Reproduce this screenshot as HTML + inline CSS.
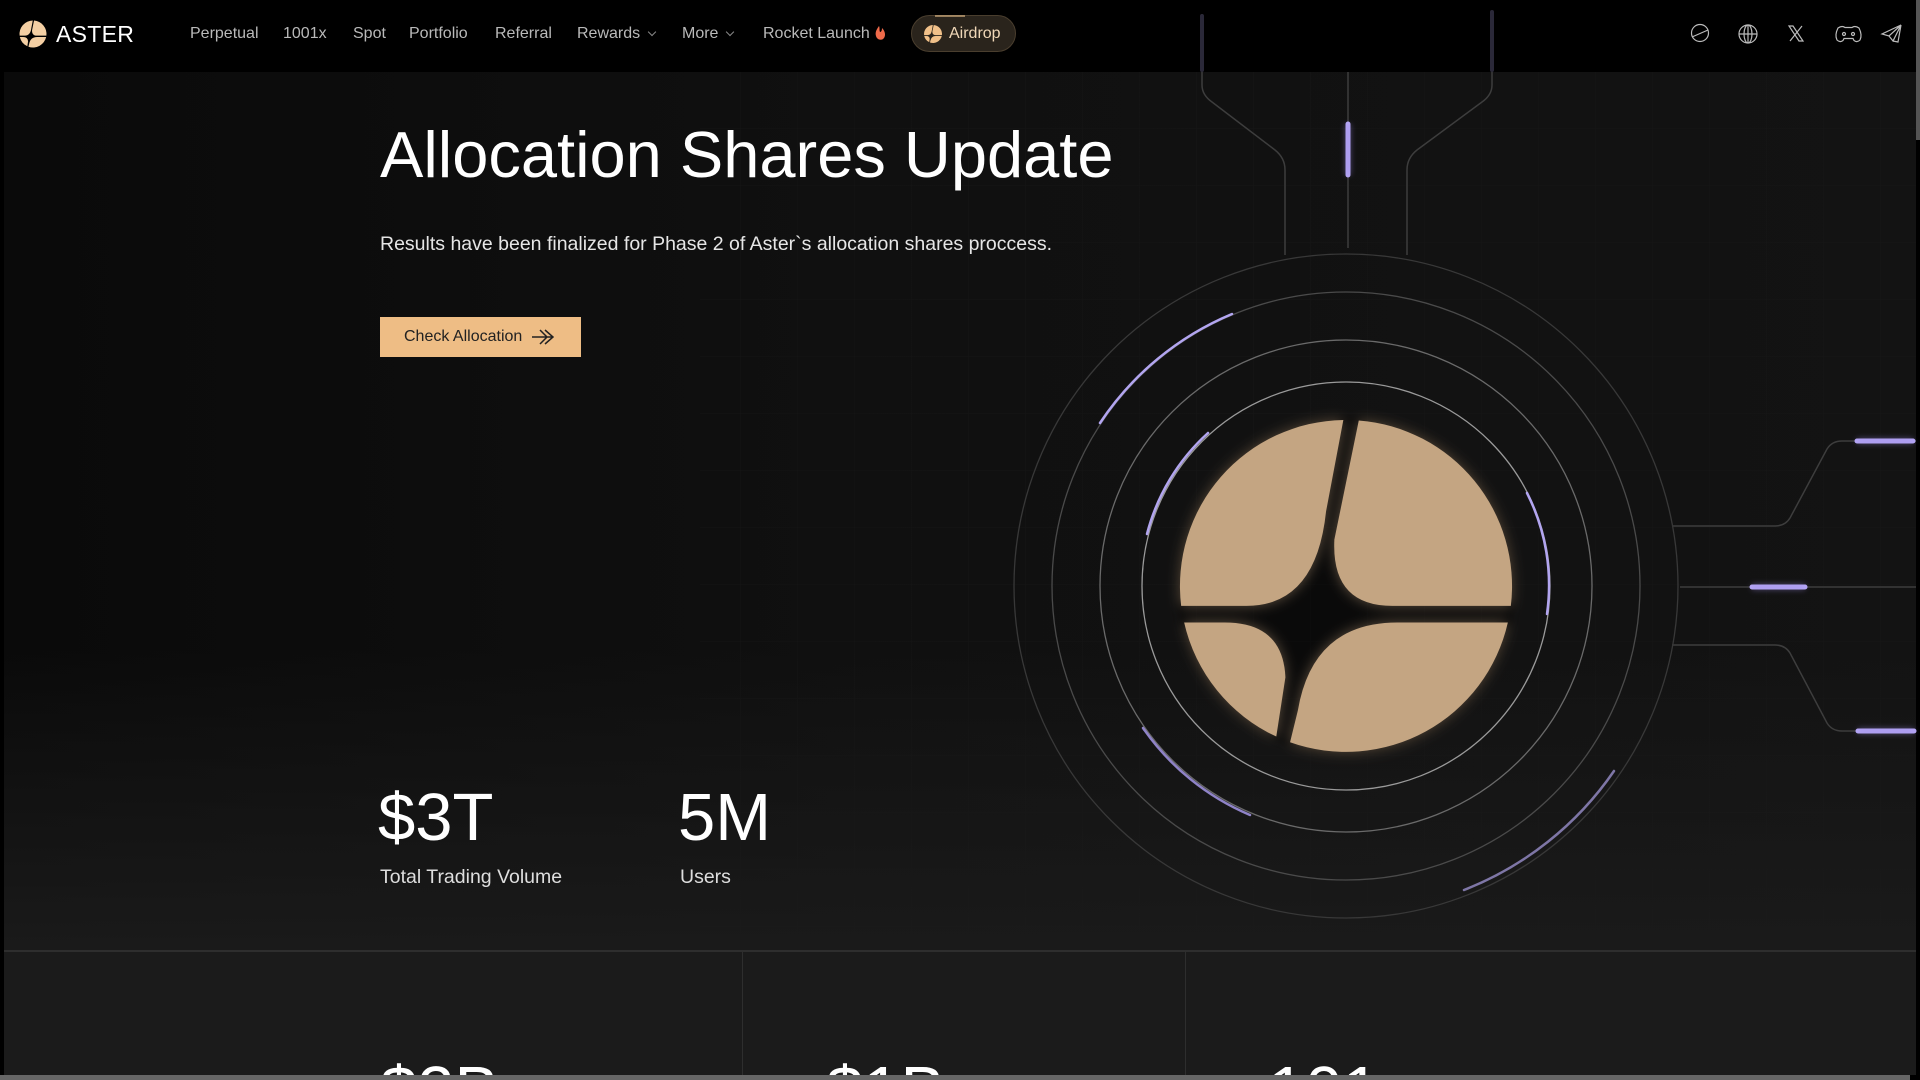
<!DOCTYPE html>
<html><head><meta charset="utf-8"><style>
*{margin:0;padding:0;box-sizing:border-box}
html,body{width:1920px;height:1080px;overflow:hidden;background:#000;font-family:"Liberation Sans",sans-serif}
.nav{position:absolute;left:0;top:0;width:1920px;height:72px;background:#000}
.main{position:absolute;left:4px;top:72px;width:1912px;height:878px;background:linear-gradient(90deg,#0a0a0a 0%,#101010 45%,#131313 100%)}
.main:after{content:"";position:absolute;left:0;right:0;bottom:0;height:300px;background:linear-gradient(180deg,rgba(27,27,27,0),#1a1a1a)}
.bottom{position:absolute;left:4px;top:950px;width:1912px;height:125px;background:#1b1b1b;border-top:2px solid #2e2e2e;overflow:hidden}
.nv{position:absolute;top:25px;font-size:16px;color:#b9b9b9}
.chev{display:inline-block;width:6px;height:6px;border-right:1px solid #888;border-bottom:1px solid #888;transform:rotate(45deg);margin-left:9px;position:relative;top:-3px}
h1{position:absolute;left:380px;top:117px;font-size:65px;font-weight:400;color:#fff;letter-spacing:0}
.sub{position:absolute;left:380px;top:233px;font-size:19.5px;color:#e6e6e6}
.btn{position:absolute;left:380px;top:317px;width:201px;height:40px;background:#eebd85;color:#222;font-size:16px;padding:11px 0 0 24px}
.btn svg{position:absolute;left:150px;top:10px}
.big{position:absolute;font-size:67px;color:#fff}
.lbl{position:absolute;font-size:19.5px;color:#dedede}
</style></head><body>
<div class="nav"></div>
<div class="main"></div>
<div class="bottom">
 <div style="position:absolute;left:738px;top:0;width:1px;height:125px;background:#2e2e2e"></div>
 <div style="position:absolute;left:1181px;top:0;width:1px;height:125px;background:#2e2e2e"></div>
 <div class="big" style="left:376px;top:100px">$2B</div>
 <div class="big" style="left:822px;top:100px">$1B</div>
 <div class="big" style="left:1264px;top:100px">101</div>
</div>
<svg width="1920" height="1080" style="position:absolute;left:0;top:0">
 <defs>
  <g id="logo">
   <path d="M -1.6 -99.99 A 100 100 0 0 0 -99.3 12 L -60 12 Q -18 12 -12 -45 Z"/>
   <path d="M 7.7 -99.7 A 100 100 0 0 1 99.3 12 L 28 12 Q -9 12 -7 -28 Z"/>
   <path d="M -97.5 22 L -73 22 Q -38 22 -36.5 55 L -42 90.7 A 100 100 0 0 1 -97.5 22 Z"/>
   <path d="M -33.7 94.1 L -29 75 Q -20 22 31 22 L 97.5 22 A 100 100 0 0 1 -33.7 94.1 Z"/>
  </g>
  <filter id="gl" x="-50%" y="-50%" width="200%" height="200%"><feGaussianBlur stdDeviation="3"/></filter>
  <filter id="dg" x="-20%" y="-20%" width="140%" height="140%"><feDropShadow dx="0" dy="0" stdDeviation="4" flood-color="#c4a37f" flood-opacity="0.45"/></filter>
  <pattern id="grid" width="57" height="57" patternUnits="userSpaceOnUse" x="0" y="72"><path d="M57 0V57H0" fill="none" stroke="#1a1a1a" stroke-width="1"/></pattern>
 </defs>
 <rect x="700" y="72" width="1216" height="878" fill="url(#grid)" opacity="0.5"/>
 <g fill="none" stroke="#3d3d3d" stroke-width="1.5">
  <path d="M1202 14V85Q1202 95 1212 102L1275 150Q1285 158 1285 170V255"/>
  <path d="M1492 14V85Q1492 95 1482 102L1417 150Q1407 158 1407 170V255"/>
  <path d="M1348 72V248"/>
  <path d="M1672 526H1775Q1785 526 1790 518L1827 449Q1832 441 1842 441H1916"/>
  <path d="M1680 587H1916"/>
  <path d="M1672 645H1775Q1785 645 1790 653L1827 723Q1832 731 1842 731H1916"/>
 </g>
 <g stroke="#2a2838" stroke-width="4" stroke-linecap="round"><path d="M1202 16V70"/><path d="M1492 12V70"/></g>
 <g stroke="#b5a6f5" stroke-width="5" stroke-linecap="round">
  <path d="M1348 124V175"/><path d="M1857 441H1913"/><path d="M1752 587H1805"/><path d="M1858 731H1914"/>
 </g>
 <g stroke="#9d8ce8" stroke-width="6" opacity="0.4" filter="url(#gl)">
  <path d="M1348 124V175"/><path d="M1857 441H1913"/><path d="M1752 587H1805"/><path d="M1858 731H1914"/>
 </g>
 <g fill="none" transform="translate(1346 586)">
  <circle r="332" stroke="#383838" stroke-width="1.3"/>
  <circle r="294" stroke="#4a4a4a" stroke-width="1.3"/>
  <circle r="246" stroke="#6a6a6a" stroke-width="1.3"/>
  <circle r="204" stroke="#9a9a9a" stroke-width="1.3"/>
  <g stroke="#b2a5f0" stroke-width="2.5" stroke-linecap="round">
   <path d="M -246 -163 A 295 295 0 0 1 -114 -272"/>
   <path d="M -199 -52 A 206 206 0 0 1 -138 -153"/>
   <path d="M 181 -93 A 204 204 0 0 1 201 28"/>
   <path d="M -203 142 A 248 248 0 0 0 -96 229" stroke="#8f83c8"/>
   <path d="M 268 185 A 326 326 0 0 1 118 304" stroke="#7e76a6"/>
  </g>
  <circle r="170" fill="#000" opacity="0.4" filter="url(#gl)"/>
  <g transform="scale(1.66)" fill="#c4a582" filter="url(#dg)"><use href="#logo"/></g>
 </g>
 <g transform="translate(33 34) scale(0.135)" fill="#f4cfa3"><use href="#logo"/></g>
 <rect x="911.5" y="15.5" width="104" height="36" rx="18" fill="#2a241c" stroke="#4a3e2e"/>
 <path d="M935 16H965" stroke="#d9b483" stroke-width="1.2"/>
 <g transform="translate(933 34) scale(0.09)" fill="#f0c089"><use href="#logo"/></g>
 <path d="M879 26C876 30 875 33 876 36C877 40 882 41 884 38C886 35 885 31 882 28C882 31 881 32 880 32C879 30 880 28 879 26Z" fill="#ef6a4a"/>
 <g fill="none" stroke="#bbb" stroke-width="1.2">
  <circle cx="1700" cy="33" r="8.5"/><path d="M1692 37L1708 30"/>
  <circle cx="1748" cy="34" r="9"/><ellipse cx="1748" cy="34" rx="4" ry="9"/><path d="M1739 34H1757M1748 25V43"/>
  <path d="M1789 26H1793L1803 41H1799ZM1802 26L1790 41"/>
  <path d="M1838 28C1841 26 1843 26 1845 27.5H1852C1854 26 1856 26 1859 28C1861 32 1862 36 1860 40C1858 42 1856 42 1854 40.5L1853 38.5H1844L1843 40.5C1841 42 1839 42 1837 40C1835 36 1836 32 1838 28Z"/>
  <circle cx="1844" cy="34" r="1.5"/><circle cx="1853" cy="34" r="1.5"/>
  <path d="M1901 25L1882 34L1889 36L1901 25L1893 41L1889 36M1901 25L1898 42L1893 41"/>
 </g>
 <rect x="1916" y="0" width="4" height="140" fill="#555"/>
 <rect x="0" y="1075" width="1910" height="5" fill="#666"/>
</svg>
<div style="position:absolute;left:56px;top:21px;font-size:23px;color:#fff;letter-spacing:0.3px">ASTER</div>
<div class="nv" style="left:190px">Perpetual</div>
<div class="nv" style="left:283px">1001x</div>
<div class="nv" style="left:353px">Spot</div>
<div class="nv" style="left:409px">Portfolio</div>
<div class="nv" style="left:495px">Referral</div>
<div class="nv" style="left:577px">Rewards<span class="chev"></span></div>
<div class="nv" style="left:682px">More<span class="chev"></span></div>
<div class="nv" style="left:763px">Rocket Launch</div>
<div class="nv" style="left:949px;color:#f0d8b8">Airdrop</div>
<h1>Allocation Shares Update</h1>
<div class="sub">Results have been finalized for Phase 2 of Aster`s allocation shares proccess.</div>
<div class="btn">Check Allocation<svg width="26" height="20"><path d="M2 10H22M15 3L23 10L15 17M10 3L17 10L10 17" fill="none" stroke="#222" stroke-width="1.5"/></svg></div>
<div class="big" style="left:378px;top:779px">$3T</div>
<div class="big" style="left:678px;top:779px">5M</div>
<div class="lbl" style="left:380px;top:866px">Total Trading Volume</div>
<div class="lbl" style="left:680px;top:866px">Users</div>
</body></html>
